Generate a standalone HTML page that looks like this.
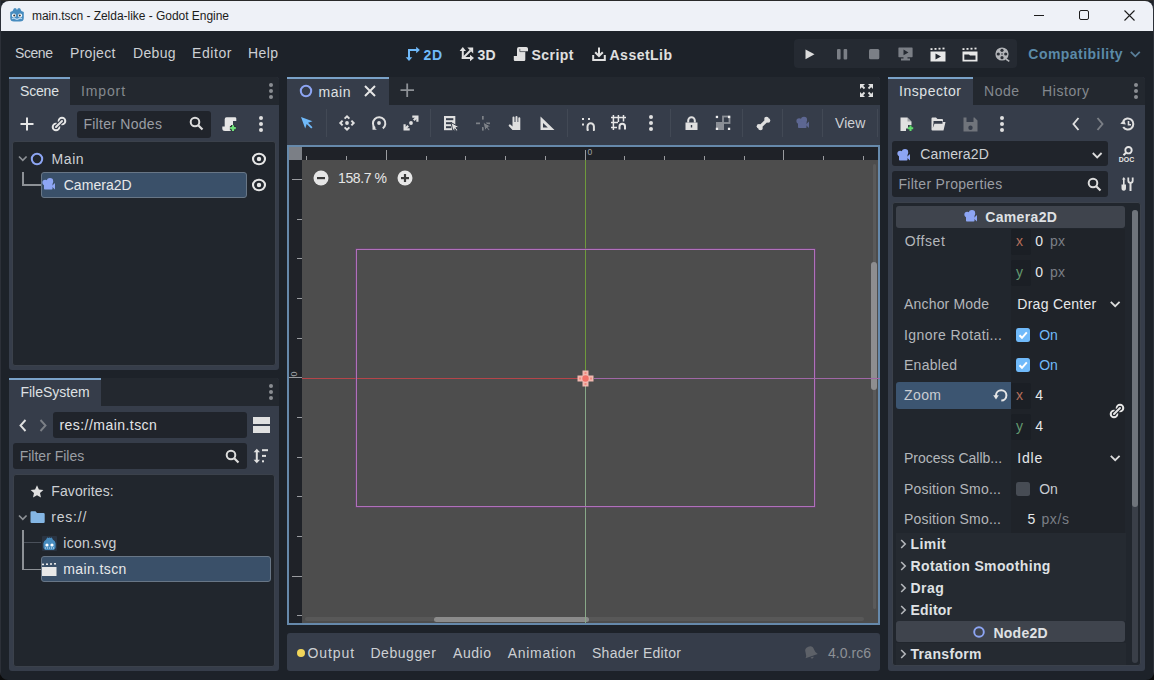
<!DOCTYPE html>
<html><head><meta charset="utf-8">
<style>
*{margin:0;padding:0;box-sizing:border-box}
html,body{width:1154px;height:680px;overflow:hidden;background:#1d2229;font-family:"Liberation Sans",sans-serif;position:relative}
.a{position:absolute}
.t{position:absolute;white-space:nowrap}
svg{position:absolute;overflow:visible}
</style></head><body>
<div class="a" style="left:0px;top:0px;width:1154px;height:1px;background:#2a2a2a;"></div>
<div class="a" style="left:0px;top:0px;width:1px;height:680px;background:#2c3038;"></div>
<div class="a" style="left:1153px;top:0px;width:1px;height:680px;background:#2c3038;"></div>
<div class="a" style="left:1px;top:1px;width:1152px;height:30px;background:#eef1f7;border-radius:8px 8px 0 0;"></div>
<svg style="left:9px;top:7px;" width="16" height="16" viewBox="0 0 16 16"><path fill="#478cbf" d="M1.2 5 L3.6 4 L5 1.3 H7 L8 3 L9 1.3 H11 L12.4 4 L14.8 5 L14.8 11 Q14.8 14.6 11 14.6 H5 Q1.2 14.6 1.2 11Z"/>
<circle cx="4.9" cy="8.4" r="2" fill="#fff"/><circle cx="11.1" cy="8.4" r="2" fill="#fff"/>
<circle cx="5.2" cy="8.6" r="1" fill="#333"/><circle cx="10.8" cy="8.6" r="1" fill="#333"/>
<path d="M3 11.8 Q4.8 10.6 6.4 11.8 Q8 13 9.6 11.8 Q11.2 10.6 13 11.8" stroke="#b5d6f2" stroke-width="1.2" fill="none"/></svg>
<div class="t" style="left:32.0px;top:8.8px;font-size:12px;line-height:14px;color:#1c1c1c;letter-spacing:-0.03px;">main.tscn - Zelda-like - Godot Engine</div>
<div class="a" style="left:1034px;top:15px;width:10px;height:1px;background:#1c1c1c;"></div>
<div class="a" style="left:1079px;top:10px;width:10px;height:10px;background:transparent;border:1px solid #1c1c1c;border-radius:2px;"></div>
<svg style="left:1124px;top:10px;" width="11" height="11" viewBox="0 0 11 11"><path d="M0.5 0.5 L10.5 10.5 M10.5 0.5 L0.5 10.5" stroke="#1c1c1c" stroke-width="1.1" fill="none"/></svg>
<div class="t" style="left:15.0px;top:45.1px;font-size:14px;line-height:16px;color:#cdd0d4;letter-spacing:-0.42px;">Scene</div>
<div class="t" style="left:70.0px;top:45.1px;font-size:14px;line-height:16px;color:#cdd0d4;letter-spacing:0.29px;">Project</div>
<div class="t" style="left:133.0px;top:45.1px;font-size:14px;line-height:16px;color:#cdd0d4;letter-spacing:0.32px;">Debug</div>
<div class="t" style="left:192.0px;top:45.1px;font-size:14px;line-height:16px;color:#cdd0d4;letter-spacing:0.59px;">Editor</div>
<div class="t" style="left:248.0px;top:45.1px;font-size:14px;line-height:16px;color:#cdd0d4;letter-spacing:0.41px;">Help</div>
<svg style="left:405px;top:46px;" width="16" height="16" viewBox="0 0 16 16"><g fill="#70bafa"><rect x="3" y="3" width="2" height="9.5"/><rect x="3" y="3" width="9" height="2"/><path d="M0.7 11.3 L4 15 L7.3 11.3Z"/><path d="M11.2 0.7 L14.9 4 L11.2 7.3Z"/></g></svg>
<div class="t" style="left:423.5px;top:47.1px;font-size:14px;line-height:16px;color:#70bafa;font-weight:bold;letter-spacing:0.81px;">2D</div>
<svg style="left:459px;top:46px;" width="16" height="16" viewBox="0 0 16 16"><g fill="#e0e0e0"><rect x="2.8" y="3.5" width="2" height="9.5"/><rect x="2.8" y="11" width="9" height="2"/><path d="M0.6 5 L3.8 1 L7 5Z"/><path d="M11 8.8 L15 12 L11 15.2Z"/><path d="M8.3 1.6 H14.2 V7.5Z"/></g><path d="M4 12 L11.5 4.5" stroke="#e0e0e0" stroke-width="2"/></svg>
<div class="t" style="left:477.5px;top:47.1px;font-size:14px;line-height:16px;color:#e0e0e0;font-weight:bold;letter-spacing:0.31px;">3D</div>
<svg style="left:513px;top:46px;" width="16" height="16" viewBox="0 0 16 16"><path fill="#e0e0e0" d="M6 1 H13.2 Q15 1 15 2.8 V5.3 H12.3 V13.8 Q12.3 15 11 15 H2 Q0.8 15 0.8 13.8 V10 H4 V3 Q4 1 6 1Z"/><path d="M6.8 2.8 V5.6 H12.3" fill="none" stroke="#1d2229" stroke-width="0.9" opacity="0.7"/></svg>
<div class="t" style="left:531.5px;top:47.1px;font-size:14px;line-height:16px;color:#e0e0e0;font-weight:bold;letter-spacing:0.47px;">Script</div>
<svg style="left:591px;top:46px;" width="16" height="16" viewBox="0 0 16 16"><g fill="none" stroke="#e0e0e0" stroke-width="2"><path d="M2.2 9 V14 H13.8 V9"/><path d="M8 1.5 V10"/><path d="M4.2 6.2 L8 10 L11.8 6.2"/></g></svg>
<div class="t" style="left:609.5px;top:47.1px;font-size:14px;line-height:16px;color:#e0e0e0;font-weight:bold;letter-spacing:0.49px;">AssetLib</div>
<div class="a" style="left:794px;top:39px;width:223px;height:29px;background:#252a32;border-radius:4px;"></div>
<svg style="left:805px;top:49px;" width="10" height="11" viewBox="0 0 10 11"><path fill="#dcdcdc" d="M0.5 0.5 L9.5 5.3 L0.5 10.3Z"/></svg>
<svg style="left:837px;top:49px;" width="11" height="11" viewBox="0 0 11 11"><rect x="0" y="0" width="3.6" height="10.5" rx="1" fill="#7b7f86"/><rect x="6.6" y="0" width="3.6" height="10.5" rx="1" fill="#7b7f86"/></svg>
<svg style="left:869px;top:49px;" width="10" height="11" viewBox="0 0 10 11"><rect x="0" y="0" width="10.3" height="10.3" rx="1.5" fill="#7b7f86"/></svg>
<svg style="left:898px;top:47px;" width="15" height="14" viewBox="0 0 15 14"><path fill="#7b7f86" d="M1 0.5 H14 Q14.6 0.5 14.6 1.2 V9.5 Q14.6 10.2 14 10.2 H9.5 V11.5 H12 V13.5 H3 V11.5 H5.5 V10.2 H1 Q0.4 10.2 0.4 9.5 V1.2 Q0.4 0.5 1 0.5Z M5.5 2.5 V8.3 L10.5 5.4Z" fill-rule="evenodd"/></svg>
<svg style="left:930px;top:47px;" width="16" height="15" viewBox="0 0 16 15"><path fill="#e8e8e8" fill-rule="evenodd" d="M0.5 4.5 H15.5 V14.5 H0.5Z M5.5 6.5 V12.5 L11 9.5Z"/><g fill="#e8e8e8"><rect x="0.5" y="1.2" width="2" height="1.8"/><rect x="4.5" y="1" width="2" height="1.8"/><rect x="8.5" y="0.8" width="2" height="1.8"/><rect x="12.5" y="0.6" width="2" height="1.8"/></g></svg>
<svg style="left:962px;top:47px;" width="16" height="15" viewBox="0 0 16 15"><path fill="#e8e8e8" fill-rule="evenodd" d="M0.5 4.5 H15.5 V14.5 H0.5Z M2.3 7.5 H7 L8 8.5 H13.5 V12.8 H2.3Z"/><g fill="#e8e8e8"><rect x="0.5" y="1.2" width="2" height="1.8"/><rect x="4.5" y="1" width="2" height="1.8"/><rect x="8.5" y="0.8" width="2" height="1.8"/><rect x="12.5" y="0.6" width="2" height="1.8"/></g></svg>
<svg style="left:995px;top:47px;" width="15" height="15" viewBox="0 0 15 15"><circle cx="7" cy="7" r="6.6" fill="#b3b5b9"/><g fill="#2b2f36"><circle cx="7" cy="3.3" r="1.6"/><circle cx="7" cy="10.7" r="1.6"/><circle cx="3.3" cy="7" r="1.6"/><circle cx="10.7" cy="7" r="1.6"/><circle cx="7" cy="7" r="0.8"/></g><path d="M11 12 L14.3 14.3" stroke="#b3b5b9" stroke-width="1.6"/></svg>
<div class="t" style="left:1028.3px;top:46.1px;font-size:14px;line-height:16px;color:#5b8aa8;font-weight:bold;letter-spacing:0.47px;">Compatibility</div>
<svg style="left:1130px;top:51px;" width="11" height="7" viewBox="0 0 11 7"><path d="M0.8 0.8 L5.3 5.3 L9.8 0.8" fill="none" stroke="#5a7f99" stroke-width="1.8"/></svg>
<div class="a" style="left:9px;top:77px;width:270px;height:293px;background:#363d4a;border-radius:0 3px 3px 3px;"></div>
<div class="a" style="left:70px;top:77px;width:209px;height:28px;background:#23282f;border-radius:0 3px 0 0;"></div>
<div class="a" style="left:9px;top:77px;width:61px;height:2px;background:#7aa2c8;"></div>
<div class="t" style="left:20.0px;top:83.4px;font-size:14px;line-height:16px;color:#dfe1e4;letter-spacing:-0.17px;">Scene</div>
<div class="t" style="left:81.0px;top:83.4px;font-size:14px;line-height:16px;color:#84888e;letter-spacing:0.87px;">Import</div>
<div class="a" style="left:268.8px;top:82.7px;width:4px;height:4px;border-radius:2px;background:#8a8d92"></div>
<div class="a" style="left:268.8px;top:88.9px;width:4px;height:4px;border-radius:2px;background:#8a8d92"></div>
<div class="a" style="left:268.8px;top:95px;width:4px;height:4px;border-radius:2px;background:#8a8d92"></div>
<svg style="left:19px;top:116px;" width="16" height="16" viewBox="0 0 16 16"><path d="M8 1.5 V14.5 M1.5 8 H14.5" stroke="#e6e6e6" stroke-width="2"/></svg>
<svg style="left:51px;top:116px;" width="16" height="16" viewBox="0 0 16 16"><circle cx="11" cy="5" r="3.3" fill="none" stroke="#e6e6e6" stroke-width="2"/><circle cx="5" cy="11" r="3.3" fill="none" stroke="#e6e6e6" stroke-width="2"/><path d="M5 11 L11 5" stroke="#363d4a" stroke-width="4"/><path d="M5 11 L11 5" stroke="#e6e6e6" stroke-width="2" stroke-linecap="round"/></svg>
<div class="a" style="left:77px;top:111px;width:134px;height:27px;background:#20242b;border-radius:3px;"></div>
<div class="t" style="left:83.4px;top:116.1px;font-size:14px;line-height:16px;color:#9a9ea4;letter-spacing:0.28px;">Filter Nodes</div>
<svg style="left:189px;top:116px;" width="15" height="15" viewBox="0 0 15 15"><circle cx="6" cy="6" r="4.3" fill="none" stroke="#dcdcdc" stroke-width="2"/><path d="M9 9 L13.5 13.5" stroke="#dcdcdc" stroke-width="2.2"/></svg>
<svg style="left:222px;top:117px;" width="15" height="15" viewBox="0 0 15 15"><path fill="#e6e6e6" d="M4.5 0.3 H13 Q14.3 0.3 14.3 1.6 V4 H11 V8.5 H9 V14 H3 Q0.3 14 0.3 11.5 V9.5 H2.7 V2.3 Q2.7 0.3 4.5 0.3Z"/><path d="M11 8 V14.2 M7.9 11.1 H14.1" stroke="#2a2f37" stroke-width="4.2"/><path d="M11 8.3 V13.9 M8.2 11.1 H13.8" stroke="#6ee07a" stroke-width="2.2"/></svg>
<div class="a" style="left:258.9px;top:115.80000000000001px;width:4.2px;height:4.2px;border-radius:2.1px;background:#e0e0e0"></div>
<div class="a" style="left:258.9px;top:121.9px;width:4.2px;height:4.2px;border-radius:2.1px;background:#e0e0e0"></div>
<div class="a" style="left:258.9px;top:127.9px;width:4.2px;height:4.2px;border-radius:2.1px;background:#e0e0e0"></div>
<div class="a" style="left:12px;top:141px;width:264px;height:225px;background:#21262d;border:1px solid #3b414b;border-radius:3px;"></div>
<svg style="left:18px;top:155px;" width="10" height="8" viewBox="0 0 10 8"><path d="M1 1.5 L4.8 5.3 L8.6 1.5" fill="none" stroke="#8d9196" stroke-width="1.7"/></svg>
<svg style="left:30px;top:152px;" width="14" height="14" viewBox="0 0 14 14"><circle cx="7" cy="7" r="5.2" fill="none" stroke="#8da5f3" stroke-width="2"/></svg>
<div class="t" style="left:51.6px;top:151.1px;font-size:14px;line-height:16px;color:#cdd0d4;letter-spacing:0.56px;">Main</div>
<div class="a" style="left:22px;top:172px;width:1.5px;height:13.5px;background:#8d9196;"></div>
<div class="a" style="left:22px;top:184px;width:19px;height:1.5px;background:#8d9196;"></div>
<div class="a" style="left:41px;top:172px;width:206px;height:26px;background:#3a5069;border:1px solid #687686;border-radius:3px;"></div>
<svg style="left:42px;top:178px;" width="14" height="13" viewBox="0 0 14 13"><g fill="#8da5f3"><circle cx="3.2" cy="4.6" r="2.8"/><circle cx="8" cy="3.3" r="3.2"/><rect x="2" y="5" width="8.5" height="6.5" rx="0.8"/><path d="M9.5 8.2 L13 5 V11.5Z"/></g></svg>
<div class="t" style="left:63.7px;top:177.1px;font-size:14px;line-height:16px;color:#e6e8ea;letter-spacing:0.05px;">Camera2D</div>
<svg style="left:252px;top:152px;" width="14" height="14" viewBox="0 0 14 14"><ellipse cx="7" cy="7" rx="6" ry="5.3" fill="none" stroke="#e6e6e6" stroke-width="2.1"/><circle cx="7" cy="7" r="2.2" fill="#e6e6e6"/></svg>
<svg style="left:252px;top:178px;" width="14" height="14" viewBox="0 0 14 14"><ellipse cx="7" cy="7" rx="6" ry="5.3" fill="none" stroke="#e6e6e6" stroke-width="2.1"/><circle cx="7" cy="7" r="2.2" fill="#e6e6e6"/></svg>
<div class="a" style="left:9px;top:378px;width:270px;height:293px;background:#363d4a;border-radius:0 3px 3px 3px;"></div>
<div class="a" style="left:101px;top:378px;width:178px;height:28px;background:#23282f;border-radius:0 3px 0 0;"></div>
<div class="a" style="left:9px;top:378px;width:92px;height:2px;background:#7aa2c8;"></div>
<div class="t" style="left:20.4px;top:384.3px;font-size:14px;line-height:16px;color:#dfe1e4;">FileSystem</div>
<div class="a" style="left:268.8px;top:383.7px;width:4px;height:4px;border-radius:2px;background:#8a8d92"></div>
<div class="a" style="left:268.8px;top:389.9px;width:4px;height:4px;border-radius:2px;background:#8a8d92"></div>
<div class="a" style="left:268.8px;top:396px;width:4px;height:4px;border-radius:2px;background:#8a8d92"></div>
<svg style="left:19px;top:419px;" width="8" height="13" viewBox="0 0 8 13"><path d="M6.5 1 L1.5 6.5 L6.5 12" fill="none" stroke="#e0e0e0" stroke-width="1.9"/></svg>
<svg style="left:39px;top:419px;" width="8" height="13" viewBox="0 0 8 13"><path d="M1.5 1 L6.5 6.5 L1.5 12" fill="none" stroke="#7b7f86" stroke-width="1.9"/></svg>
<div class="a" style="left:53px;top:412px;width:194px;height:26px;background:#20242b;border-radius:3px;"></div>
<div class="t" style="left:59.4px;top:417.4px;font-size:14px;line-height:16px;color:#e3e5e7;letter-spacing:0.46px;">res://main.tscn</div>
<div class="a" style="left:253px;top:417px;width:16.5px;height:7px;background:#e0e0e0;"></div>
<div class="a" style="left:253px;top:426px;width:16.5px;height:7px;background:#e0e0e0;"></div>
<div class="a" style="left:13px;top:443px;width:234px;height:26px;background:#20242b;border-radius:3px;"></div>
<div class="t" style="left:19.7px;top:447.5px;font-size:14px;line-height:16px;color:#9a9ea4;">Filter Files</div>
<svg style="left:225px;top:449px;" width="15" height="15" viewBox="0 0 15 15"><circle cx="6" cy="6" r="4.3" fill="none" stroke="#dcdcdc" stroke-width="2"/><path d="M9 9 L13.5 13.5" stroke="#dcdcdc" stroke-width="2.2"/></svg>
<svg style="left:253px;top:448px;" width="16" height="16" viewBox="0 0 16 16"><g fill="#e0e0e0"><path d="M3.8 0.8 L7 4.3 H4.8 V11.7 H7 L3.8 15.2 L0.6 11.7 H2.8 V4.3 H0.6Z"/><rect x="9" y="1.2" width="6" height="2"/><rect x="9" y="6.9" width="4" height="2"/><rect x="9" y="12.3" width="2" height="2"/></g></svg>
<div class="a" style="left:13px;top:474px;width:262px;height:193px;background:#21262d;border:1px solid #3b414b;border-radius:3px;"></div>
<svg style="left:30px;top:485px;" width="14" height="13" viewBox="0 0 14 13"><path fill="#e0e0e0" d="M7 0.3 L8.9 4.4 L13.4 4.9 L10 8 L11 12.5 L7 10.2 L3 12.5 L4 8 L0.6 4.9 L5.1 4.4Z"/></svg>
<div class="t" style="left:51.3px;top:482.7px;font-size:14px;line-height:16px;color:#cdd0d4;letter-spacing:0.10px;">Favorites:</div>
<svg style="left:18px;top:514px;" width="10" height="8" viewBox="0 0 10 8"><path d="M1 1.5 L4.8 5.3 L8.6 1.5" fill="none" stroke="#8d9196" stroke-width="1.7"/></svg>
<svg style="left:29.5px;top:511px;" width="15" height="12" viewBox="0 0 15 12"><path fill="#84b6e4" d="M0.5 1.5 Q0.5 0.3 1.7 0.3 H5.5 L7 2 H13.5 Q14.7 2 14.7 3.2 V11 Q14.7 12 13.5 12 H1.7 Q0.5 12 0.5 11Z"/></svg>
<div class="t" style="left:51.3px;top:509.1px;font-size:14px;line-height:16px;color:#cdd0d4;letter-spacing:0.78px;">res://</div>
<div class="a" style="left:22px;top:530px;width:1.5px;height:40px;background:#8d9196;"></div>
<div class="a" style="left:22px;top:568.5px;width:19px;height:1.5px;background:#8d9196;"></div>
<div class="a" style="left:24px;top:542px;width:17px;height:1px;background:#4a505a;"></div>
<svg style="left:42px;top:536px;" width="15" height="15" viewBox="0 0 15 15"><rect x="0" y="0" width="15" height="15" rx="1" fill="#2a3442"/><path fill="#478cbf" d="M2.2 5.2 L4.2 3.6 L5.2 1.6 L6.9 2.1 L7.5 1.2 L8.1 2.1 L9.8 1.6 L10.8 3.6 L12.8 5.2 L13.6 7.2 L13.6 11.2 Q13.2 14 10.4 14 L4.6 14 Q1.8 14 1.4 11.2 L1.4 7.2 Z"/><circle cx="5" cy="9" r="1.6" fill="#fff"/><circle cx="10" cy="9" r="1.6" fill="#fff"/><path d="M3 12 H12" stroke="#fff" stroke-width="0.8" stroke-dasharray="1 1"/></svg>
<div class="t" style="left:63.3px;top:535.0px;font-size:14px;line-height:16px;color:#cdd0d4;letter-spacing:0.24px;">icon.svg</div>
<div class="a" style="left:41px;top:556px;width:230px;height:26px;background:#3a5069;border:1px solid #687686;border-radius:3px;"></div>
<svg style="left:42px;top:562px;" width="15" height="14" viewBox="0 0 15 14"><path fill="#e8e8e8" d="M0 5 H14.5 V14 H0Z"/><g fill="#e8e8e8"><rect x="0" y="1.6" width="2" height="1.6"/><rect x="4" y="1.4" width="2" height="1.6"/><rect x="8" y="1.2" width="2" height="1.6"/><rect x="12" y="1" width="2" height="1.6"/></g></svg>
<div class="t" style="left:63.3px;top:561.0px;font-size:14px;line-height:16px;color:#e6e8ea;letter-spacing:0.39px;">main.tscn</div>
<div class="a" style="left:287px;top:77px;width:593px;height:68px;background:#363d4a;border-radius:0 3px 0 0;"></div>
<div class="a" style="left:389px;top:77px;width:491px;height:28px;background:#23282f;border-radius:0 3px 0 0;"></div>
<div class="a" style="left:287px;top:77px;width:102px;height:2px;background:#7aa2c8;"></div>
<svg style="left:299px;top:85px;" width="14" height="14" viewBox="0 0 14 14"><circle cx="7" cy="6" r="5.2" fill="none" stroke="#8da5f3" stroke-width="2"/></svg>
<div class="t" style="left:318.5px;top:84.1px;font-size:14px;line-height:16px;color:#dfe1e4;letter-spacing:0.56px;">main</div>
<svg style="left:364px;top:85px;" width="12" height="12" viewBox="0 0 12 12"><path d="M1 1 L11 11 M11 1 L1 11" stroke="#e6e6e6" stroke-width="2"/></svg>
<svg style="left:400px;top:83px;" width="15" height="15" viewBox="0 0 15 15"><path d="M7.2 0.5 V14 M0.5 7.2 H14" stroke="#8d9196" stroke-width="1.8"/></svg>
<svg style="left:300px;top:116px;" width="14" height="14" viewBox="0 0 14 14"><path fill="#70bafa" d="M1 1 L12.5 5.2 L8 6.8 L12.5 11.3 L11.2 12.6 L6.7 8.1 L5.2 12.6Z"/></svg>
<div class="a" style="left:326px;top:108.5px;width:1px;height:28.5px;background:#424955;"></div>
<div class="a" style="left:430.4px;top:108.5px;width:1px;height:28.5px;background:#424955;"></div>
<div class="a" style="left:566.6px;top:108.5px;width:1px;height:28.5px;background:#424955;"></div>
<div class="a" style="left:670.4px;top:108.5px;width:1px;height:28.5px;background:#424955;"></div>
<div class="a" style="left:742.3px;top:108.5px;width:1px;height:28.5px;background:#424955;"></div>
<div class="a" style="left:782.2px;top:108.5px;width:1px;height:28.5px;background:#424955;"></div>
<div class="a" style="left:822.4px;top:108.5px;width:1px;height:28.5px;background:#424955;"></div>
<div class="a" style="left:877.3px;top:108.5px;width:1px;height:28.5px;background:#424955;"></div>
<svg style="left:339px;top:115px;" width="16" height="16" viewBox="0 0 16 16"><circle cx="8" cy="8" r="1.9" fill="#e0e0e0"/><g fill="none" stroke="#e0e0e0" stroke-width="2" stroke-linejoin="miter"><path d="M5.6 3.6 L8 1.3 L10.4 3.6"/><path d="M5.6 12.4 L8 14.7 L10.4 12.4"/><path d="M3.6 5.6 L1.3 8 L3.6 10.4"/><path d="M12.4 5.6 L14.7 8 L12.4 10.4"/></g></svg>
<svg style="left:371px;top:115px;" width="16" height="16" viewBox="0 0 16 16"><path d="M4 13 A6.2 6.2 0 1 1 11.8 13.4" fill="none" stroke="#e0e0e0" stroke-width="2"/><circle cx="8" cy="8" r="1.9" fill="#e0e0e0"/><path d="M1.5 10.5 V14.8 H5.8Z" fill="#e0e0e0"/></svg>
<svg style="left:403px;top:115px;" width="16" height="16" viewBox="0 0 16 16"><circle cx="8" cy="8" r="1.9" fill="#e0e0e0"/><g fill="none" stroke="#e0e0e0" stroke-width="2.2"><path d="M9.3 1.6 H14.4 V6.7"/><path d="M13.8 2.2 L10.8 5.2"/><path d="M1.6 9.3 V14.4 H6.7"/><path d="M2.2 13.8 L5.2 10.8"/></g></svg>
<svg style="left:443px;top:115px;" width="17" height="17" viewBox="0 0 17 17"><rect x="1" y="1" width="11.3" height="14.2" fill="#e0e0e0"/><g fill="#363d4a"><rect x="3" y="3.2" width="7.3" height="2"/><rect x="3" y="7.2" width="6" height="2"/><rect x="3" y="11.2" width="5" height="2"/></g><path d="M8 7.5 L16.2 12 L13 12.7 L15 15.3 L13.7 16.3 L11.7 13.7 L10 16.3Z" fill="#e0e0e0" stroke="#363d4a" stroke-width="1"/></svg>
<svg style="left:475px;top:115px;" width="17" height="17" viewBox="0 0 17 17"><g fill="#7d8187"><rect x="7" y="1" width="1.7" height="3.6"/><rect x="1" y="7.5" width="4" height="1.7"/><rect x="11" y="7.5" width="4" height="1.7"/><rect x="7" y="12" width="1.7" height="3.6"/></g><path d="M8 7 L16.2 11.5 L13 12.2 L15 14.8 L13.7 15.8 L11.7 13.2 L10 15.8Z" fill="#7d8187" stroke="#363d4a" stroke-width="1"/></svg>
<svg style="left:508px;top:116px;" width="15" height="15" viewBox="0 0 15 15"><path fill="#e0e0e0" d="M4.5 6.5 V1.6 Q4.5 0.6 5.5 0.6 Q6.5 0.6 6.5 1.6 V6 H7.5 V1 Q7.5 0 8.5 0 Q9.5 0 9.5 1 V6 H10.3 V2.2 Q10.3 1.2 11.3 1.2 Q12.3 1.2 12.3 2.2 V14 H4.5 L1 10.3 Q0.3 9.4 1.1 8.7 Q1.9 8 2.7 8.8 L4.5 10.5Z"/></svg>
<svg style="left:540px;top:116px;" width="15" height="15" viewBox="0 0 15 15"><path fill="#e0e0e0" fill-rule="evenodd" d="M0.5 0.5 L14.5 14 H0.5Z M3 7 V11.5 H7.8Z"/></svg>
<svg style="left:582px;top:117.5px;" width="14" height="13" viewBox="0 0 14 13"><g fill="#e0e0e0"><rect x="0" y="0" width="2" height="2"/><rect x="6" y="0" width="2" height="2"/><rect x="0" y="5.5" width="2" height="2"/></g><path d="M5.5 12.5 V8.5 A3.2 3.2 0 0 1 11.9 8.5 V12.5" fill="none" stroke="#e0e0e0" stroke-width="2"/><path d="M5 12 h1.5 M11 12 h1.5" stroke="#e0e0e0" stroke-width="2"/></svg>
<svg style="left:610px;top:114px;" width="17" height="17" viewBox="0 0 17 17"><g stroke="#e6e6e6" stroke-width="1.5" fill="none"><path d="M3.4 1 V16 M8.4 1 V8 M13.5 1 V7.5 M1 3.5 H16 M1 8.5 H8 M1 13.6 H7"/></g><path d="M9.5 15.5 V12.5 A2.75 2.75 0 0 1 15 12.5 V15.5" fill="none" stroke="#e6e6e6" stroke-width="2"/></svg>
<div class="a" style="left:648.8px;top:114.9px;width:4.2px;height:4.2px;border-radius:2.1px;background:#e0e0e0"></div>
<div class="a" style="left:648.8px;top:120.9px;width:4.2px;height:4.2px;border-radius:2.1px;background:#e0e0e0"></div>
<div class="a" style="left:648.8px;top:126.9px;width:4.2px;height:4.2px;border-radius:2.1px;background:#e0e0e0"></div>
<svg style="left:685px;top:116px;" width="13" height="15" viewBox="0 0 13 15"><path d="M3.2 6.5 V4.5 A3.3 3.3 0 0 1 9.8 4.5 V6.5" fill="none" stroke="#e0e0e0" stroke-width="2"/><path fill="#e0e0e0" fill-rule="evenodd" d="M0.5 6.5 H12.5 V14 H0.5Z M5.8 9 H7.2 V11.5 H5.8Z"/></svg>
<svg style="left:715px;top:115px;" width="16" height="16" viewBox="0 0 16 16"><rect x="1" y="7" width="8" height="8" fill="#8b8f96"/><rect x="8" y="1.5" width="6.5" height="6.5" fill="none" stroke="#8b8f96" stroke-width="1.8"/><g fill="#f0f0f0"><rect x="0.8" y="0.8" width="2.3" height="2.3"/><rect x="12.9" y="0.8" width="2.3" height="2.3"/><rect x="0.8" y="12.7" width="2.3" height="2.3"/><rect x="12.9" y="12.7" width="2.3" height="2.3"/></g></svg>
<svg style="left:756px;top:116px;" width="15" height="15" viewBox="0 0 15 15"><g fill="#e0e0e0"><circle cx="3" cy="10.3" r="2.3"/><circle cx="4.5" cy="12" r="2.3"/><circle cx="10.5" cy="3" r="2.3"/><circle cx="12" cy="4.5" r="2.3"/></g><path d="M3.8 11.2 L11.2 3.8" stroke="#e0e0e0" stroke-width="3.2"/></svg>
<svg style="left:796px;top:117px;" width="14" height="12" viewBox="0 0 14 12"><g fill="#5d6792"><circle cx="3.2" cy="4.1" r="2.8"/><circle cx="8" cy="2.9" r="3.1"/><rect x="2" y="4.5" width="8.5" height="6.5" rx="0.8"/><path d="M9.5 7.7 L13 4.5 V11Z"/></g></svg>
<div class="t" style="left:835.0px;top:115.1px;font-size:14px;line-height:16px;color:#cdd0d4;letter-spacing:0.07px;">View</div>
<div class="a" style="left:860px;top:83px;width:14px;height:14px;background:transparent;"></div>
<svg style="left:859px;top:83px;" width="15" height="15" viewBox="0 0 15 15"><g fill="#e0e0e0"><path d="M1 1 H6 L1 6Z"/><path d="M14 1 H9 L14 6Z"/><path d="M1 14 H6 L1 9Z"/><path d="M14 14 H9 L14 9Z"/></g><path d="M2.5 2.5 L5.5 5.5 M12.5 2.5 L9.5 5.5 M2.5 12.5 L5.5 9.5 M12.5 12.5 L9.5 9.5" stroke="#e0e0e0" stroke-width="1.8"/></svg>
<div class="a" style="left:287px;top:145px;width:593px;height:480px;background:#6689ab;"></div>
<div class="a" style="left:289px;top:147px;width:589px;height:476px;background:#4d4d4d;"></div>
<div class="a" style="left:289px;top:147px;width:13px;height:13px;background:#7b7f86;"></div>
<div class="a" style="left:302px;top:147px;width:576px;height:13px;background:#1f2228;"></div>
<div class="a" style="left:289px;top:160px;width:13px;height:463px;background:#1f2228;"></div>
<div class="a" style="left:306px;top:156px;width:1px;height:4px;background:#9a9ca0;"></div>
<div class="a" style="left:346px;top:156px;width:1px;height:4px;background:#9a9ca0;"></div>
<div class="a" style="left:386px;top:150px;width:1px;height:10px;background:#9a9ca0;"></div>
<div class="a" style="left:426px;top:156px;width:1px;height:4px;background:#9a9ca0;"></div>
<div class="a" style="left:465px;top:156px;width:1px;height:4px;background:#9a9ca0;"></div>
<div class="a" style="left:505px;top:156px;width:1px;height:4px;background:#9a9ca0;"></div>
<div class="a" style="left:545px;top:156px;width:1px;height:4px;background:#9a9ca0;"></div>
<div class="a" style="left:585px;top:150px;width:1px;height:10px;background:#9a9ca0;"></div>
<div class="a" style="left:624px;top:156px;width:1px;height:4px;background:#9a9ca0;"></div>
<div class="a" style="left:664px;top:156px;width:1px;height:4px;background:#9a9ca0;"></div>
<div class="a" style="left:704px;top:156px;width:1px;height:4px;background:#9a9ca0;"></div>
<div class="a" style="left:744px;top:156px;width:1px;height:4px;background:#9a9ca0;"></div>
<div class="a" style="left:783px;top:150px;width:1px;height:10px;background:#9a9ca0;"></div>
<div class="a" style="left:823px;top:156px;width:1px;height:4px;background:#9a9ca0;"></div>
<div class="a" style="left:863px;top:156px;width:1px;height:4px;background:#9a9ca0;"></div>
<div class="a" style="left:292px;top:179px;width:10px;height:1px;background:#9a9ca0;"></div>
<div class="a" style="left:297px;top:219px;width:5px;height:1px;background:#9a9ca0;"></div>
<div class="a" style="left:297px;top:258px;width:5px;height:1px;background:#9a9ca0;"></div>
<div class="a" style="left:297px;top:298px;width:5px;height:1px;background:#9a9ca0;"></div>
<div class="a" style="left:297px;top:338px;width:5px;height:1px;background:#9a9ca0;"></div>
<div class="a" style="left:289px;top:377px;width:13px;height:1px;background:#9a9ca0;"></div>
<div class="a" style="left:297px;top:417px;width:5px;height:1px;background:#9a9ca0;"></div>
<div class="a" style="left:297px;top:457px;width:5px;height:1px;background:#9a9ca0;"></div>
<div class="a" style="left:297px;top:496px;width:5px;height:1px;background:#9a9ca0;"></div>
<div class="a" style="left:297px;top:536px;width:5px;height:1px;background:#9a9ca0;"></div>
<div class="a" style="left:292px;top:576px;width:10px;height:1px;background:#9a9ca0;"></div>
<div class="a" style="left:297px;top:615px;width:5px;height:1px;background:#9a9ca0;"></div>
<div class="t" style="left:587.5px;top:146.8px;font-size:8.5px;line-height:10.5px;color:#a0a2a6;">0</div>
<div class="t" style="left:289px;top:369px;font-size:9px;line-height:10px;color:#a0a2a6;transform:rotate(-90deg);transform-origin:center;width:10px;text-align:center">0</div>
<svg style="left:313px;top:170px;" width="16" height="16" viewBox="0 0 16 16"><circle cx="8" cy="8" r="7.5" fill="#e6e6e6"/><rect x="4" y="7" width="8" height="2.2" fill="#3a3a3a"/></svg>
<div class="t" style="left:338.0px;top:170.1px;font-size:14px;line-height:16px;color:#e6e6e6;letter-spacing:-0.39px;">158.7 %</div>
<svg style="left:397px;top:170px;" width="16" height="16" viewBox="0 0 16 16"><circle cx="8" cy="8" r="7.5" fill="#e6e6e6"/><rect x="4" y="7" width="8" height="2.2" fill="#3a3a3a"/><rect x="6.9" y="4" width="2.2" height="8" fill="#3a3a3a"/></svg>
<div class="a" style="left:585px;top:160px;width:1px;height:218px;background:#6f9a3c;"></div>
<div class="a" style="left:585px;top:379px;width:1px;height:244px;background:#88a888;"></div>
<div class="a" style="left:302px;top:378px;width:283px;height:1px;background:#b5454a;"></div>
<div class="a" style="left:356px;top:249px;width:459px;height:258px;background:transparent;border:1.5px solid #b070bb;box-shadow:0 0 0 0.5px #70407a;"></div>
<svg style="left:577px;top:370px;" width="17" height="17" viewBox="0 0 17 17"><g fill="#f0b8b0"><rect x="5.5" y="0.5" width="6" height="16"/><rect x="0.5" y="5.5" width="16" height="6"/></g><circle cx="8.5" cy="8.5" r="3.2" fill="#f07068"/><g fill="#f08a80"><rect x="7.5" y="2" width="2" height="2"/><rect x="7.5" y="13" width="2" height="2"/><rect x="2" y="7.5" width="2" height="2"/><rect x="13" y="7.5" width="2" height="2"/></g></svg>
<div class="a" style="left:872.5px;top:164px;width:3.5px;height:445px;background:#5a5a5a;border-radius:2px;"></div>
<div class="a" style="left:871px;top:262px;width:6px;height:128px;background:#8e8e90;border-radius:3px;"></div>
<div class="a" style="left:305px;top:617px;width:559px;height:3.5px;background:#585858;border-radius:2px;"></div>
<div class="a" style="left:434px;top:616.8px;width:155px;height:4.8px;background:#8b8b8b;border-radius:3px;"></div>
<div class="a" style="left:594px;top:378px;width:286px;height:1px;background:#a067a6;"></div>
<div class="a" style="left:585px;top:617px;width:1px;height:5px;background:#88a888;"></div>
<div class="a" style="left:287px;top:633px;width:593px;height:38px;background:#363d4a;border-radius:3px;"></div>
<div class="a" style="left:297px;top:649px;width:8px;height:8px;border-radius:4px;background:#f2d65a"></div>
<div class="t" style="left:307.5px;top:645.1px;font-size:14px;line-height:16px;color:#cdd0d4;letter-spacing:0.90px;">Output</div>
<div class="t" style="left:370.4px;top:645.1px;font-size:14px;line-height:16px;color:#cdd0d4;letter-spacing:0.56px;">Debugger</div>
<div class="t" style="left:453.0px;top:645.1px;font-size:14px;line-height:16px;color:#cdd0d4;letter-spacing:0.55px;">Audio</div>
<div class="t" style="left:507.8px;top:645.1px;font-size:14px;line-height:16px;color:#cdd0d4;letter-spacing:0.68px;">Animation</div>
<div class="t" style="left:592.0px;top:645.1px;font-size:14px;line-height:16px;color:#cdd0d4;letter-spacing:0.27px;">Shader Editor</div>
<svg style="left:802px;top:645px;" width="15" height="14" viewBox="0 0 15 14"><path fill="#5d6168" d="M2 11.5 Q4 9.5 4 6 Q4 1.5 8.5 1.5 Q13 1.5 13 6 Q13 9.5 15 11.5Z M7 12.5 H10 Q10 14 8.5 14 Q7 14 7 12.5Z" transform="rotate(-20 8 8)"/></svg>
<div class="t" style="left:828.0px;top:645.1px;font-size:14px;line-height:16px;color:#8d9196;letter-spacing:0.04px;">4.0.rc6</div>
<div class="a" style="left:888px;top:77px;width:257px;height:594px;background:#363d4a;border-radius:0 3px 3px 3px;"></div>
<div class="a" style="left:973px;top:77px;width:172px;height:28px;background:#23282f;border-radius:0 3px 0 0;"></div>
<div class="a" style="left:888px;top:77px;width:85px;height:2px;background:#7aa2c8;"></div>
<div class="t" style="left:899.0px;top:83.4px;font-size:14px;line-height:16px;color:#dfe1e4;letter-spacing:0.55px;">Inspector</div>
<div class="t" style="left:984.0px;top:83.4px;font-size:14px;line-height:16px;color:#84888e;letter-spacing:0.52px;">Node</div>
<div class="t" style="left:1042.0px;top:83.4px;font-size:14px;line-height:16px;color:#84888e;letter-spacing:0.58px;">History</div>
<div class="a" style="left:1133.8px;top:82.7px;width:4px;height:4px;border-radius:2px;background:#8a8d92"></div>
<div class="a" style="left:1133.8px;top:88.9px;width:4px;height:4px;border-radius:2px;background:#8a8d92"></div>
<div class="a" style="left:1133.8px;top:95px;width:4px;height:4px;border-radius:2px;background:#8a8d92"></div>
<svg style="left:900px;top:117px;" width="14" height="15" viewBox="0 0 14 15"><path fill="#e0e0e0" d="M0.5 0.5 H7.5 L11.5 4.5 V8 H8 V11.5 H6 V14 H0.5Z"/><path fill="#2f3540" d="M7.5 0.5 V4.5 H11.5Z" opacity="0.35"/><path d="M10.5 8.5 V14 M7.8 11.2 H13.2" stroke="#5fdc6b" stroke-width="2"/></svg>
<svg style="left:931px;top:117px;" width="15" height="14" viewBox="0 0 15 14"><path fill="#e0e0e0" fill-rule="evenodd" d="M0.5 1.5 Q0.5 0.5 1.5 0.5 H5 L6.5 2 H11 Q12 2 12 3 V5 H14.5 L12.5 13.5 H1.5 Q0.5 13.5 0.5 12.5Z M2.5 6 L1.8 11 L3.5 6.8 H11.5 V4 H2.5Z"/></svg>
<svg style="left:963px;top:117px;" width="15" height="15" viewBox="0 0 15 15"><path fill="#70747b" fill-rule="evenodd" d="M0.5 0.5 H11.5 L14.5 3.5 V14.5 H0.5Z M3.5 0.5 V5 H10.5 V0.5Z M7.5 8.5 A2.2 2.2 0 1 0 7.5 12.9 A2.2 2.2 0 1 0 7.5 8.5Z"/></svg>
<div class="a" style="left:999.8px;top:115.9px;width:4.2px;height:4.2px;border-radius:2.1px;background:#e0e0e0"></div>
<div class="a" style="left:999.8px;top:121.9px;width:4.2px;height:4.2px;border-radius:2.1px;background:#e0e0e0"></div>
<div class="a" style="left:999.8px;top:127.9px;width:4.2px;height:4.2px;border-radius:2.1px;background:#e0e0e0"></div>
<svg style="left:1072px;top:117px;" width="8" height="14" viewBox="0 0 8 14"><path d="M6.5 1 L1.5 7 L6.5 13" fill="none" stroke="#e0e0e0" stroke-width="1.9"/></svg>
<svg style="left:1096px;top:117px;" width="8" height="14" viewBox="0 0 8 14"><path d="M1.5 1 L6.5 7 L1.5 13" fill="none" stroke="#7b7f86" stroke-width="1.9"/></svg>
<svg style="left:1120px;top:117px;" width="15" height="14" viewBox="0 0 15 14"><path d="M3.2 4 A5.5 5.5 0 1 1 3.2 10" fill="none" stroke="#e0e0e0" stroke-width="2"/><path d="M0.3 6.8 L4 2.5 L5.8 7.5Z" fill="#e0e0e0"/><path d="M8.5 4 V7.8 H11" fill="none" stroke="#e0e0e0" stroke-width="1.6"/></svg>
<div class="a" style="left:892px;top:141px;width:216px;height:25px;background:#20242b;border-radius:3px;"></div>
<svg style="left:897px;top:149px;" width="14" height="13" viewBox="0 0 14 13"><g fill="#8da5f3"><circle cx="3.2" cy="4.6" r="2.8"/><circle cx="8" cy="3.3" r="3.2"/><rect x="2" y="5" width="8.5" height="6.5" rx="0.8"/><path d="M9.5 8.2 L13 5 V11.5Z"/></g></svg>
<div class="t" style="left:920.3px;top:146.1px;font-size:14px;line-height:16px;color:#cdd0d4;letter-spacing:0.11px;">Camera2D</div>
<svg style="left:1092px;top:152px;" width="11" height="8" viewBox="0 0 11 8"><path d="M0.8 1 L5.2 5.5 L9.6 1" fill="none" stroke="#dcdcdc" stroke-width="1.8"/></svg>
<svg style="left:1118px;top:145px;" width="17" height="18" viewBox="0 0 17 18"><circle cx="10.5" cy="5.2" r="3.2" fill="none" stroke="#e6e6e6" stroke-width="1.9"/><path d="M8.2 7.5 L5.5 10.2" stroke="#e6e6e6" stroke-width="2"/><text x="0.8" y="16.6" font-family="Liberation Sans" font-weight="bold" font-size="7.6" fill="#e6e6e6" textLength="15.4" lengthAdjust="spacingAndGlyphs">DOC</text></svg>
<div class="a" style="left:892px;top:171px;width:216px;height:26px;background:#20242b;border-radius:3px;"></div>
<div class="t" style="left:898.4px;top:175.8px;font-size:14px;line-height:16px;color:#9a9ea4;letter-spacing:0.31px;">Filter Properties</div>
<svg style="left:1087px;top:177px;" width="15" height="15" viewBox="0 0 15 15"><circle cx="6" cy="6" r="4.3" fill="none" stroke="#dcdcdc" stroke-width="2"/><path d="M9 9 L13.5 13.5" stroke="#dcdcdc" stroke-width="2.2"/></svg>
<svg style="left:1120px;top:177px;" width="14" height="14" viewBox="0 0 14 14"><g fill="#e0e0e0"><path d="M1.5 7.5 H6 V11 Q6 13.8 3.8 13.8 Q1.5 13.8 1.5 11Z"/><rect x="3" y="2" width="1.6" height="6"/><path d="M3.8 0 L5.6 2.5 H2Z"/><rect x="9.5" y="5" width="2" height="9"/></g><path d="M8.3 0.5 V3.5 Q8.3 5.8 10.5 5.8 Q12.7 5.8 12.7 3.5 V0.5" fill="none" stroke="#e0e0e0" stroke-width="1.8"/></svg>
<div class="a" style="left:892px;top:202px;width:249px;height:464px;background:#21262d;border:1px solid #3b414b;border-radius:3px;"></div>
<div class="a" style="left:1132px;top:210px;width:6px;height:453px;background:#3a3f48;border-radius:3px;"></div>
<div class="a" style="left:1132px;top:210px;width:6px;height:297px;background:#6f747b;border-radius:3px;"></div>
<div class="a" style="left:896px;top:206px;width:229px;height:22px;background:#3f444d;border-radius:3px;"></div>
<svg style="left:964px;top:210px;" width="14" height="13" viewBox="0 0 14 13"><g fill="#8da5f3"><circle cx="3.2" cy="4.6" r="2.8"/><circle cx="8" cy="3.3" r="3.2"/><rect x="2" y="5" width="8.5" height="6.5" rx="0.8"/><path d="M9.5 8.2 L13 5 V11.5Z"/></g></svg>
<div class="t" style="left:985.2px;top:209.1px;font-size:14px;line-height:16px;color:#dfe1e4;font-weight:bold;letter-spacing:0.36px;">Camera2D</div>
<div class="a" style="left:1011px;top:229px;width:114px;height:304px;background:#1f2329;"></div>
<div class="t" style="left:904.8px;top:233.4px;font-size:14px;line-height:16px;color:#b4b7bb;letter-spacing:0.58px;">Offset</div>
<div class="a" style="left:1011px;top:229px;width:20px;height:26px;background:#1b1f25;border-radius:2px;"></div>
<div class="t" style="left:1016.0px;top:233.4px;font-size:14px;line-height:16px;color:#b46e5a;">x</div>
<div class="t" style="left:1035.3px;top:233.4px;font-size:14px;line-height:16px;color:#e6e8ea;">0</div>
<div class="t" style="left:1050.0px;top:233.4px;font-size:14px;line-height:16px;color:#7b7f86;letter-spacing:0.22px;">px</div>
<div class="a" style="left:1011px;top:260px;width:20px;height:26px;background:#1b1f25;border-radius:2px;"></div>
<div class="t" style="left:1016.0px;top:264.4px;font-size:14px;line-height:16px;color:#649a70;">y</div>
<div class="t" style="left:1035.3px;top:264.4px;font-size:14px;line-height:16px;color:#e6e8ea;">0</div>
<div class="t" style="left:1050.0px;top:264.4px;font-size:14px;line-height:16px;color:#7b7f86;letter-spacing:0.22px;">px</div>
<div class="t" style="left:904.0px;top:296.1px;font-size:14px;line-height:16px;color:#b4b7bb;letter-spacing:0.18px;">Anchor Mode</div>
<div class="t" style="left:1017.3px;top:296.1px;font-size:14px;line-height:16px;color:#e6e8ea;letter-spacing:0.27px;">Drag Center</div>
<svg style="left:1110px;top:301px;" width="11" height="7" viewBox="0 0 11 7"><path d="M0.8 0.8 L5.2 5.2 L9.6 0.8" fill="none" stroke="#dcdcdc" stroke-width="1.8"/></svg>
<div class="t" style="left:904.0px;top:327.1px;font-size:14px;line-height:16px;color:#b4b7bb;letter-spacing:0.41px;">Ignore Rotati...</div>
<div class="a" style="left:1016px;top:328px;width:14px;height:14px;background:#70bafa;border-radius:2.5px;"></div>
<svg style="left:1017px;top:329px;" width="12" height="12" viewBox="0 0 12 12"><path d="M2.5 6.2 L5 8.8 L9.8 3.4" fill="none" stroke="#fff" stroke-width="2"/></svg>
<div class="t" style="left:1039.2px;top:327.1px;font-size:14px;line-height:16px;color:#70bafa;letter-spacing:0.03px;">On</div>
<div class="t" style="left:904.0px;top:357.1px;font-size:14px;line-height:16px;color:#b4b7bb;letter-spacing:0.27px;">Enabled</div>
<div class="a" style="left:1016px;top:357.6px;width:14px;height:14px;background:#70bafa;border-radius:2.5px;"></div>
<svg style="left:1017px;top:358.6px;" width="12" height="12" viewBox="0 0 12 12"><path d="M2.5 6.2 L5 8.8 L9.8 3.4" fill="none" stroke="#fff" stroke-width="2"/></svg>
<div class="t" style="left:1039.2px;top:357.1px;font-size:14px;line-height:16px;color:#70bafa;letter-spacing:0.03px;">On</div>
<div class="a" style="left:896px;top:382px;width:115px;height:27px;background:#3c5571;border-radius:3px 0 0 3px;"></div>
<div class="t" style="left:904.0px;top:387.3px;font-size:14px;line-height:16px;color:#c8ccd2;letter-spacing:0.41px;">Zoom</div>
<svg style="left:992px;top:388px;" width="16" height="16" viewBox="0 0 16 16"><path d="M9.3 12.6 A5.2 5.2 0 1 0 4 7.3 V8" fill="none" stroke="#e6e6e6" stroke-width="2"/><path d="M1.2 7.2 L6.8 7.2 L4 11.6Z" fill="#e6e6e6"/></svg>
<div class="a" style="left:1011px;top:383px;width:20px;height:26px;background:#1b1f25;border-radius:2px;"></div>
<div class="t" style="left:1016.0px;top:387.3px;font-size:14px;line-height:16px;color:#b46e5a;">x</div>
<div class="t" style="left:1035.3px;top:387.3px;font-size:14px;line-height:16px;color:#e6e8ea;">4</div>
<div class="a" style="left:1011px;top:414px;width:20px;height:26px;background:#1b1f25;border-radius:2px;"></div>
<div class="t" style="left:1016.0px;top:418.3px;font-size:14px;line-height:16px;color:#649a70;">y</div>
<div class="t" style="left:1035.3px;top:418.3px;font-size:14px;line-height:16px;color:#e6e8ea;">4</div>
<svg style="left:1109px;top:403px;" width="16" height="16" viewBox="0 0 16 16"><circle cx="11" cy="5" r="3.3" fill="none" stroke="#e6e6e6" stroke-width="2"/><circle cx="5" cy="11" r="3.3" fill="none" stroke="#e6e6e6" stroke-width="2"/><path d="M5 11 L11 5" stroke="#21262d" stroke-width="4"/><path d="M5 11 L11 5" stroke="#e6e6e6" stroke-width="2" stroke-linecap="round"/></svg>
<div class="t" style="left:904.0px;top:450.1px;font-size:14px;line-height:16px;color:#b4b7bb;">Process Callb...</div>
<div class="t" style="left:1017.3px;top:450.1px;font-size:14px;line-height:16px;color:#e6e8ea;letter-spacing:0.81px;">Idle</div>
<svg style="left:1110px;top:455px;" width="11" height="7" viewBox="0 0 11 7"><path d="M0.8 0.8 L5.2 5.2 L9.6 0.8" fill="none" stroke="#dcdcdc" stroke-width="1.8"/></svg>
<div class="t" style="left:904.0px;top:481.1px;font-size:14px;line-height:16px;color:#b4b7bb;letter-spacing:0.20px;">Position Smo...</div>
<div class="a" style="left:1016px;top:482.4px;width:14px;height:13.6px;background:#474c54;border-radius:2.5px;"></div>
<div class="t" style="left:1039.2px;top:481.1px;font-size:14px;line-height:16px;color:#c8ccd2;letter-spacing:0.03px;">On</div>
<div class="t" style="left:904.0px;top:511.1px;font-size:14px;line-height:16px;color:#b4b7bb;letter-spacing:0.20px;">Position Smo...</div>
<div class="t" style="left:1027.4px;top:511.1px;font-size:14px;line-height:16px;color:#e6e8ea;">5</div>
<div class="t" style="left:1041.4px;top:511.1px;font-size:14px;line-height:16px;color:#7b7f86;letter-spacing:0.68px;">px/s</div>
<div class="a" style="left:896px;top:533px;width:230px;height:88px;background:#252a31;"></div>
<svg style="left:900px;top:539px;" width="7" height="10" viewBox="0 0 7 10"><path d="M1.2 1 L5.2 5 L1.2 9" fill="none" stroke="#b4b7bb" stroke-width="1.6"/></svg>
<div class="t" style="left:910.5px;top:536.1px;font-size:14px;line-height:16px;color:#dfe1e4;font-weight:bold;letter-spacing:0.44px;">Limit</div>
<svg style="left:900px;top:561px;" width="7" height="10" viewBox="0 0 7 10"><path d="M1.2 1 L5.2 5 L1.2 9" fill="none" stroke="#b4b7bb" stroke-width="1.6"/></svg>
<div class="t" style="left:910.5px;top:558.1px;font-size:14px;line-height:16px;color:#dfe1e4;font-weight:bold;letter-spacing:0.36px;">Rotation Smoothing</div>
<svg style="left:900px;top:583px;" width="7" height="10" viewBox="0 0 7 10"><path d="M1.2 1 L5.2 5 L1.2 9" fill="none" stroke="#b4b7bb" stroke-width="1.6"/></svg>
<div class="t" style="left:910.5px;top:580.1px;font-size:14px;line-height:16px;color:#dfe1e4;font-weight:bold;letter-spacing:0.50px;">Drag</div>
<svg style="left:900px;top:604.5px;" width="7" height="10" viewBox="0 0 7 10"><path d="M1.2 1 L5.2 5 L1.2 9" fill="none" stroke="#b4b7bb" stroke-width="1.6"/></svg>
<div class="t" style="left:910.5px;top:601.6px;font-size:14px;line-height:16px;color:#dfe1e4;font-weight:bold;letter-spacing:0.21px;">Editor</div>
<div class="a" style="left:896px;top:621.4px;width:229px;height:21px;background:#3f444d;border-radius:3px;"></div>
<svg style="left:973px;top:626px;" width="12" height="12" viewBox="0 0 12 12"><circle cx="6" cy="6" r="4.8" fill="none" stroke="#8da5f3" stroke-width="1.9"/></svg>
<div class="t" style="left:993.4px;top:624.6px;font-size:14px;line-height:16px;color:#dfe1e4;font-weight:bold;letter-spacing:0.28px;">Node2D</div>
<div class="a" style="left:896px;top:643px;width:230px;height:22px;background:#252a31;"></div>
<svg style="left:900px;top:649px;" width="7" height="10" viewBox="0 0 7 10"><path d="M1.2 1 L5.2 5 L1.2 9" fill="none" stroke="#b4b7bb" stroke-width="1.6"/></svg>
<div class="t" style="left:910.5px;top:645.8px;font-size:14px;line-height:16px;color:#dfe1e4;font-weight:bold;letter-spacing:0.32px;">Transform</div>
<svg style="left:0px;top:672px;" width="8" height="8" viewBox="0 0 8 8"><path d="M0 0 A8 8 0 0 0 8 8 H0Z" fill="#0b0b0b"/></svg>
<svg style="left:1146px;top:672px;" width="8" height="8" viewBox="0 0 8 8"><path d="M8 0 A8 8 0 0 1 0 8 H8Z" fill="#0b0b0b"/></svg>
</body></html>
